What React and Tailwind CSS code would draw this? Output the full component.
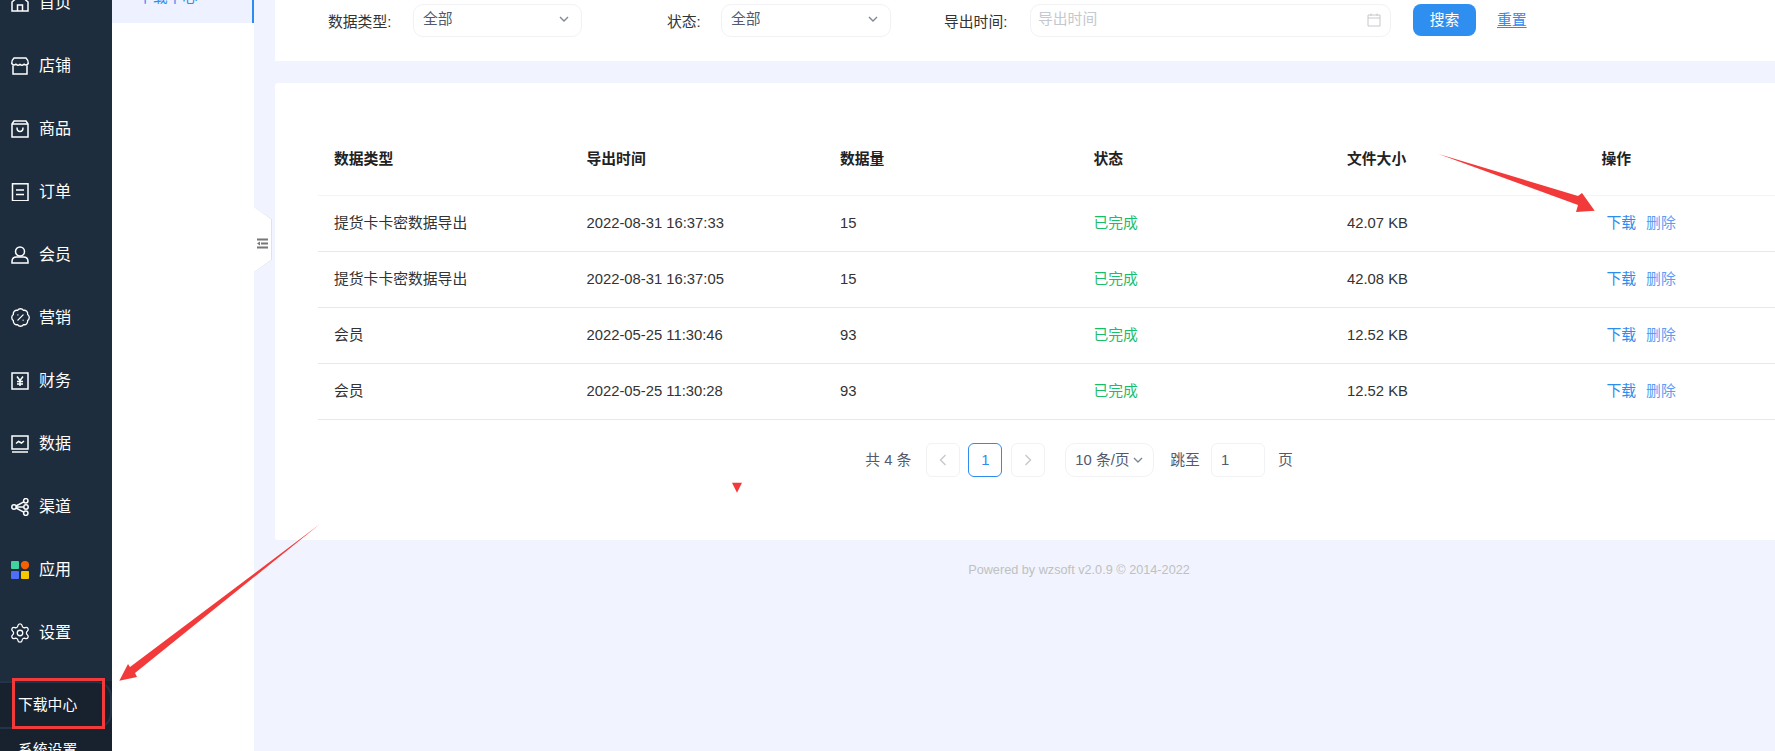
import React from "react";
import { Settings, BadgePercent } from "lucide-react";

const s = { fill: "none", stroke: "#fff", strokeWidth: 1.5 };
const Svg = ({ children }) => (
  <svg width="18" height="18" viewBox="0 0 18 18" className="shrink-0">{children}</svg>
);
const icons = {
  home: <Svg><path {...s} d="M1 8 L1 17 H17 V8 L9 1 Z" /><path {...s} d="M6.5 17 V11 H11.5 V17" /></Svg>,
  store: <Svg><path {...s} d="M3 1 H15 Q17.3 3 17.2 6.5 Q15.5 9 13 7.2 Q11 9 9 7.4 Q7 9 5 7.2 Q2.5 9 .8 6.5 Q.7 3 3 1 Z" /><path {...s} d="M2 8.5 V17 H16 V8.5" /></Svg>,
  bag: <Svg><path {...s} d="M1 4 L3 1 H15 L17 4 V17 H1 Z" /><path {...s} d="M1 4 H17" /><path {...s} d="M6 7.5 Q6 11.5 9 11.5 Q12 11.5 12 7.5" /></Svg>,
  doc: <Svg><rect {...s} x="1.5" y=".8" width="15.5" height="17" /><path {...s} d="M5 7 H13 M5 11.5 H13" /></Svg>,
  user: <Svg><circle {...s} cx="9" cy="5.5" r="4.5" /><path {...s} d="M1 17 V15.5 Q1 11 5.5 11 H12.5 Q17 11 17 15.5 V17 Z" /></Svg>,
  promo: <BadgePercent size={21} strokeWidth={1.5} color="#fff" className="shrink-0 -mx-[1.5px]" />,
  yen: <Svg><rect {...s} x="1" y="1" width="16" height="16" /><path {...s} d="M6 4.5 L9 8.5 L12 4.5 M9 8.5 V14 M6 9.5 H12 M6 12 H12" /></Svg>,
  monitor: <Svg><rect {...s} x="1" y="1" width="16" height="13" /><path {...s} d="M1 17 H17" /><path {...s} d="M5 8.5 L7.5 6.5 L10.5 8 L13 6" /></Svg>,
  share: <Svg><circle {...s} cx="3" cy="9" r="2.2" /><circle {...s} cx="14.8" cy="2.8" r="2.2" /><circle {...s} cx="15" cy="9" r="2.2" /><circle {...s} cx="14.8" cy="15.2" r="2.2" /><path {...s} d="M5.2 9 H12.8 M5 8 L12.8 3.8 M5 10 L12.8 14.2" /></Svg>,
  apps: <Svg><rect x="0" y="0" width="8" height="8" rx="1" fill="#41d4a0" /><circle cx="14" cy="4" r="4.2" fill="#f56000" /><rect x="0" y="10" width="8" height="8" rx="1" fill="#4f6ef7" /><rect x="10" y="10" width="8" height="8" rx="1" fill="#f5c800" /></Svg>,
  gear: <Settings size={22} strokeWidth={1.4} color="#fff" className="shrink-0 -mx-[2px]" />,
};

const menu = [
  ["首页", "home"], ["店铺", "store"], ["商品", "bag"], ["订单", "doc"], ["会员", "user"], ["营销", "promo"],
  ["财务", "yen"], ["数据", "monitor"], ["渠道", "share"], ["应用", "apps"], ["设置", "gear"],
];

const rows = [
  ["提货卡卡密数据导出", "2022-08-31 16:37:33", "15", "42.07 KB"],
  ["提货卡卡密数据导出", "2022-08-31 16:37:05", "15", "42.08 KB"],
  ["会员", "2022-05-25 11:30:46", "93", "12.52 KB"],
  ["会员", "2022-05-25 11:30:28", "93", "12.52 KB"],
];

const Chevron = ({ color = "#808695", d = "M1 1 L5 5 L9 1" }) => (
  <svg width="10" height="6" viewBox="0 0 10 6" className="shrink-0"><path d={d} fill="none" stroke={color} strokeWidth="1.4" /></svg>
);

const Select = ({ w }) => (
  <div className={`${w} h-[33px] flex items-center justify-between pl-[9px] pr-[12px] pb-[3px] border border-[#f2f2f4] rounded-[10px] text-[#515a6e]`}>
    <span>全部</span>
    <Chevron />
  </div>
);

const PageBtn = ({ dir }) => (
  <div className="w-[34px] h-[34px] flex items-center justify-center border border-[#f2f2f4] rounded-[6px]">
    <svg width="8" height="12" viewBox="0 0 8 12">
      <path d={dir === "l" ? "M6.5 1 L1.5 6 L6.5 11" : "M1.5 1 L6.5 6 L1.5 11"} fill="none" stroke="#c5c8ce" strokeWidth="1.4" />
    </svg>
  </div>
);

export default function App() {
  return (
    <div className="relative w-[1775px] h-[751px] overflow-hidden flex bg-[#f1f4fe] text-[14.8px] font-['Liberation_Sans','Noto_Sans_CJK_SC',sans-serif]">
      {/* main sidebar */}
      <aside className="w-[112px] shrink-0 h-full bg-[#1e2d3d] text-white">
        <div className="-mt-[29px] flex flex-col">
          {menu.map(([t, ic]) => (
            <div key={t} className="h-[63px] flex items-center pl-[11px] gap-[10px] text-[16px]">
              {icons[ic]}
              <span>{t}</span>
            </div>
          ))}
        </div>
        <div className="mt-[17px] h-[120px] bg-[#18222f]">
          <div className="h-[48px] flex items-center pl-[18px] border-t-2 border-r-2 border-b-2 border-[#233449] rounded-r-[16px]">下载中心</div>
          <div className="pl-[18px] mt-[11px] leading-[20px]">系统设置</div>
        </div>
      </aside>

      {/* sub menu */}
      <nav className="w-[142px] shrink-0 h-full bg-white text-[#2d8cf0]">
        <div className="-mt-[29px] h-[52px] flex items-center pl-[26px] bg-[#eef1ff] border-r-[2px] border-[#2d8cf0]">下载中心</div>
      </nav>

      {/* content */}
      <main className="ml-[21px] w-[1608px] shrink-0 flex flex-col">
        <section className="h-[61px] bg-white flex items-start pt-[4px] pl-[53px] text-[#515a6e]">
          <span className="h-[33px] leading-[36px] w-[85px] text-[#333]">数据类型:</span>
          <Select w="w-[169px]" />
          <span className="h-[33px] leading-[36px] ml-[85px] w-[54px] text-[#333]">状态:</span>
          <Select w="w-[170px]" />
          <span className="h-[33px] leading-[36px] ml-[53px] w-[86px] text-[#333]">导出时间:</span>
          <div className="w-[361px] h-[33px] flex items-center justify-between pl-[7px] pr-[9px] pb-[2px] border border-[#f2f2f4] rounded-[10px] text-[#c5c8ce]">
            <span>导出时间</span>
            <svg width="14" height="14" viewBox="0 0 14 14"><path d="M1 2 H13 V13 H1 Z M1 5 H13 M4 .5 V3 M10 .5 V3" fill="none" stroke="#c5c8ce" strokeWidth="1" /></svg>
          </div>
          <div className="ml-[22px] w-[63px] h-[32px] flex items-center justify-center rounded-[8px] bg-[#2e8ff0] text-white">搜索</div>
          <span className="ml-[21px] h-[32px] leading-[32px] text-[#2d8cf0] underline underline-offset-2">重置</span>
        </section>

        <section className="mt-[22px] h-[457px] bg-white rounded-l-[3px] pt-[41px] pl-[43px] pr-[43px]">
          <div className="grid grid-cols-[252.5px_253.5px_253.5px_253.5px_254.5px_253.5px] h-[72px] items-center pl-[16px] border-b border-[#f4f4f4] font-semibold text-[#222]">
            <span>数据类型</span><span>导出时间</span><span>数据量</span><span>状态</span><span>文件大小</span><span>操作</span>
          </div>
          {rows.map((r, i) => (
            <div key={i} className="grid grid-cols-[252.5px_253.5px_253.5px_253.5px_254.5px_253.5px] h-[56px] items-center pl-[16px] border-b border-[#e8e8e8] text-[#333]">
              <span>{r[0]}</span><span>{r[1]}</span><span>{r[2]}</span>
              <span className="text-[#19be6b]">已完成</span>
              <span>{r[3]}</span>
              <span className="pl-[5px] flex gap-[10px]">
                <span className="text-[#2d8cf0]">下载</span>
                <span className="text-[#5b9df5]">删除</span>
              </span>
            </div>
          ))}
          <div className="mt-[23px] flex items-center justify-center text-[#515a6e]">
            <span className="mr-[15px]">共 4 条</span>
            <PageBtn dir="l" />
            <div className="ml-[8px] w-[34px] h-[34px] flex items-center justify-center border border-[#2d8cf0] rounded-[6px] text-[#2d8cf0]">1</div>
            <div className="ml-[9px]"><PageBtn dir="r" /></div>
            <div className="ml-[20px] w-[89px] h-[34px] flex items-center justify-between pl-[9px] pr-[10px] border border-[#f2f2f4] rounded-[10px]">
              <span>10 条/页</span>
              <Chevron />
            </div>
            <span className="ml-[16px]">跳至</span>
            <div className="ml-[11px] w-[54px] h-[34px] flex items-center pl-[9px] border border-[#f2f2f4] rounded-[6px]">1</div>
            <span className="ml-[13px]">页</span>
          </div>
        </section>

        <footer className="mt-[22px] text-center text-[12.7px] leading-[16px] text-[#c0c0c0]">Powered by wzsoft v2.0.9 © 2014-2022</footer>
      </main>

      {/* collapse handle */}
      <div className="absolute left-[254px] top-[207px] w-[18px] h-[65px] bg-[#dfe2ee]  [clip-path:polygon(0_0,100%_19%,100%_81%,0_100%)]">
        <div className="w-[17px] h-full bg-white flex items-center justify-center pt-[7px] [clip-path:polygon(0_0,100%_19%,100%_81%,0_100%)]">
          <svg width="11" height="11" viewBox="0 0 11 11">
            <path d="M0 1.5 H11 M4 5.5 H11 M0 9.5 H11" stroke="#777" strokeWidth="2" />
            <path d="M0 5.5 L3 3.5 V7.5 Z" fill="#777" />
          </svg>
        </div>
      </div>

      {/* red annotations */}
      <svg className="absolute inset-0 pointer-events-none" width="1775" height="751" viewBox="0 0 1775 751">
        <polygon fill="#f33a3a" points="320,524 135,673 137,677 119.3,680.7 128,664 130,667" />
        <polygon fill="#f33a3a" points="1438.5,154 1578,196 1582,193 1594.7,210.7 1576,212 1578,205" />
        <polygon fill="#f33a3a" points="732,482.7 742,482.7 737,492.7" />
      </svg>
      <div className="absolute left-[12px] top-[678px] w-[93px] h-[51px] border-[3px] border-[#f33a3a]" />
    </div>
  );
}
